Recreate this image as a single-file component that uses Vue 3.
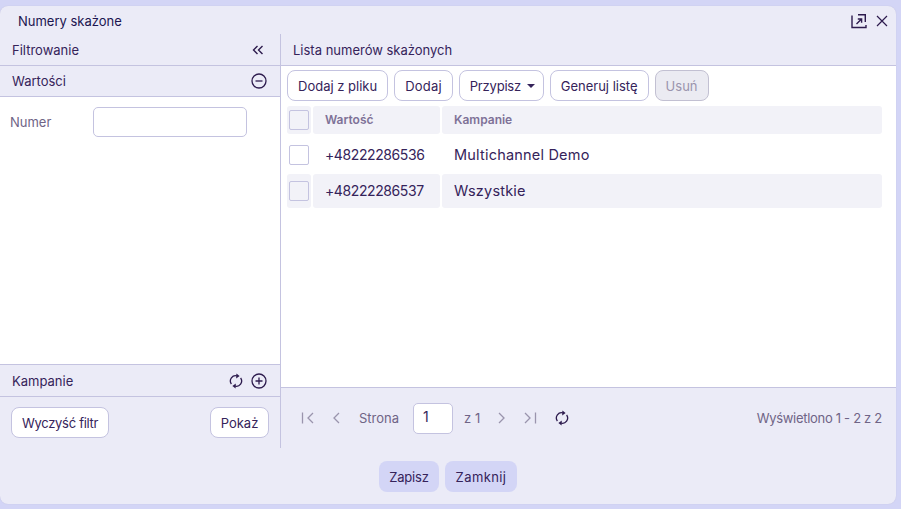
<template>
  <div class="page">
    <div class="dialog">
      <div class="title-bar">
        <span class="title">Numery skażone</span>
        <div class="title-icons">
          <svg width="16" height="16" viewBox="0 0 16 16" fill="none" stroke="#2d1b4e" stroke-width="1.4">
            <path d="M1 2.5V14.5H15V12" />
            <path d="M7 1.7h7.3V9" />
            <path d="M5.5 11L10 6.5M6.8 6h3.8v3.8" />
          </svg>
          <svg width="12" height="12" viewBox="0 0 12 12" fill="none" stroke="#2d1b4e" stroke-width="1.2">
            <path d="M1 1l10 10M11 1L1 11" />
          </svg>
        </div>
      </div>

      <div class="columns">
        <aside class="filters">
          <div class="panel-head first">
            <span>Filtrowanie</span>
            <svg class="collapse" width="12" height="10" viewBox="0 0 12 10" fill="none" stroke="#2d1b4e" stroke-width="1.4">
              <path d="M5.5 1L1.5 5l4 4M10.5 1l-4 4 4 4" />
            </svg>
          </div>
          <div class="panel-head">
            <span>Wartości</span>
            <svg width="16" height="16" viewBox="0 0 16 16" fill="none" stroke="#2d1b4e" stroke-width="1.3">
              <circle cx="8" cy="8" r="7" />
              <path d="M4.5 8h7" />
            </svg>
          </div>
          <div class="filter-body">
            <label class="field-label">Numer</label>
            <input class="field-input" type="text" />
          </div>
          <div class="panel-head bottom">
            <span>Kampanie</span>
            <div class="head-icons">
              <svg width="14" height="16" viewBox="0 0 14 16" fill="none" stroke="#2d1b4e" stroke-width="1.3">
                <path d="M2.4 11A5.2 5.2 0 0 1 8.2 3" />
                <path d="M11.6 5A5.2 5.2 0 0 1 5.8 13" />
                <path d="M7.4 .4l3.2 2.7-3.4 2.3z" fill="#2d1b4e" stroke="none" />
                <path d="M6.6 15.6l-3.2-2.7 3.4-2.3z" fill="#2d1b4e" stroke="none" />
              </svg>
              <svg width="16" height="16" viewBox="0 0 16 16" fill="none" stroke="#2d1b4e" stroke-width="1.3">
                <circle cx="8" cy="8" r="7" />
                <path d="M4.5 8h7M8 4.5v7" />
              </svg>
            </div>
          </div>
          <div class="filter-actions">
            <button class="btn clear">Wyczyść filtr</button>
            <button class="btn show">Pokaż</button>
          </div>
        </aside>

        <section class="list">
          <div class="list-head">Lista numerów skażonych</div>
          <div class="list-body">
            <div class="toolbar">
              <button class="btn">Dodaj z pliku</button>
              <button class="btn add">Dodaj</button>
              <button class="btn assign">Przypisz <i class="caret"></i></button>
              <button class="btn">Generuj listę</button>
              <button class="btn disabled">Usuń</button>
            </div>
            <div class="table">
              <div class="row head">
                <div class="cell check"><span class="box"></span></div>
                <div class="cell">Wartość</div>
                <div class="cell">Kampanie</div>
              </div>
              <div v-for="(row, i) in rows" :key="row.value" class="row" :class="{ odd: i % 2 === 1 }">
                <div class="cell check"><span class="box"></span></div>
                <div class="cell number">{{ row.value }}</div>
                <div class="cell campaign">{{ row.campaign }}</div>
              </div>
            </div>
          </div>
          <div class="pager">
            <svg width="14" height="12" viewBox="0 0 14 12" fill="none" stroke="#9a94ad" stroke-width="1.3">
              <path d="M1.5 .5v11M12 1L7 6l5 5" />
            </svg>
            <svg class="prev" width="8" height="12" viewBox="0 0 8 12" fill="none" stroke="#9a94ad" stroke-width="1.3">
              <path d="M7 1L2 6l5 5" />
            </svg>
            <span class="page-label">Strona</span>
            <input class="page-input" type="text" value="1" />
            <span class="page-total">z 1</span>
            <svg class="next" width="8" height="12" viewBox="0 0 8 12" fill="none" stroke="#9a94ad" stroke-width="1.3">
              <path d="M1 1l5 5-5 5" />
            </svg>
            <svg class="last" width="14" height="12" viewBox="0 0 14 12" fill="none" stroke="#9a94ad" stroke-width="1.3">
              <path d="M12.5 .5v11M2 1l5 5-5 5" />
            </svg>
            <svg class="reload" width="14" height="16" viewBox="0 0 14 16" fill="none" stroke="#2d1b4e" stroke-width="1.3">
              <path d="M2.4 11A5.2 5.2 0 0 1 8.2 3" />
              <path d="M11.6 5A5.2 5.2 0 0 1 5.8 13" />
              <path d="M7.4 .4l3.2 2.7-3.4 2.3z" fill="#2d1b4e" stroke="none" />
              <path d="M6.6 15.6l-3.2-2.7 3.4-2.3z" fill="#2d1b4e" stroke="none" />
            </svg>
            <span class="summary">Wyświetlono 1 - 2 z 2</span>
          </div>
        </section>
      </div>

      <div class="footer">
        <button class="btn primary save">Zapisz</button>
        <button class="btn primary close">Zamknij</button>
      </div>
    </div>
  </div>
</template>

<script setup>
const rows = [
  { value: '+48222286536', campaign: 'Multichannel Demo' },
  { value: '+48222286537', campaign: 'Wszystkie' }
]
</script>

<style scoped>
.page {
  height: 509px;
  width: 901px;
  box-sizing: border-box;
  padding: 6px 5px 5px 0;
  background: #d3d5f6;
  overflow: hidden;
  font-family: Inter, "Noto Sans", sans-serif;
  color: #35235a;
}

.dialog {
  height: 100%;
  display: flex;
  flex-direction: column;
  background: #ebebf7;
  border-radius: 8px;
  box-shadow: 0 0 1px #b9b8d8;
}

.title-bar {
  height: 28px;
  flex: none;
  display: flex;
  align-items: center;
  justify-content: space-between;
  padding: 1px 8px 0 18px;
  box-sizing: border-box;
}

.title {
  font-size: 13px;
  color: #1c1550;
}

.title-icons {
  display: flex;
  align-items: center;
  gap: 9px;
}

.columns {
  height: 414px;
  flex: none;
  display: flex;
}

.filters {
  width: 280px;
  flex: none;
  display: flex;
  flex-direction: column;
}

.panel-head {
  height: 31px;
  flex: none;
  box-sizing: border-box;
  display: flex;
  align-items: center;
  justify-content: space-between;
  padding: 0 13px 0 12px;
  font-size: 13px;
  border-bottom: 1px solid #c4c3e0;
}

.panel-head.first {
  height: 32px;
}

.panel-head.bottom {
  border-top: 1px solid #c4c3e0;
  height: 33px;
}

.collapse {
  margin-right: 3px;
}

.head-icons {
  display: flex;
  align-items: center;
  gap: 8px;
}

.filter-body {
  flex: 1;
  background: #fff;
  display: flex;
  align-items: flex-start;
  padding: 10px 0 0 10px;
}

.field-label {
  width: 83px;
  font-size: 13px;
  line-height: 30px;
  color: #6f6486;
}

.field-input {
  width: 154px;
  height: 30px;
  box-sizing: border-box;
  border: 1px solid #c4c3e0;
  border-radius: 5px;
  background: #fff;
  outline: none;
}

.filter-actions {
  height: 51px;
  flex: none;
  box-sizing: border-box;
  display: flex;
  justify-content: space-between;
  align-items: flex-start;
  padding: 10px 11px 0;
}

.list {
  flex: 1;
  display: flex;
  flex-direction: column;
  border-left: 1px solid #c4c3e0;
}

.list-head {
  height: 32px;
  flex: none;
  box-sizing: border-box;
  display: flex;
  align-items: center;
  padding-left: 12px;
  font-size: 13px;
  border-bottom: 1px solid #c4c3e0;
}

.list-body {
  flex: 1;
  background: #fff;
  padding: 4px 14px 0 6px;
  border-bottom: 1px solid #c4c3e0;
}

.toolbar {
  display: flex;
  gap: 6px;
}

.btn {
  height: 31px;
  box-sizing: border-box;
  padding: 0 10px;
  border: 1px solid #c4c3e0;
  border-radius: 8px;
  background: #fff;
  color: #35235a;
  font-family: inherit;
  font-size: 13px;
  display: inline-flex;
  align-items: center;
  white-space: nowrap;
}

.btn.clear {
  letter-spacing: -0.3px;
}

.btn.show {
  width: 59px;
  justify-content: center;
}

.btn.add {
  letter-spacing: 0.2px;
}

.btn.assign {
  letter-spacing: -0.2px;
  width: 85px;
}

.btn.disabled {
  width: 54px;
  justify-content: center;
  background: #ebebf2;
  border-color: #c2c0d2;
  color: #9a94ad;
}

.btn.primary {
  background: #d3d5f6;
  border: none;
  justify-content: center;
}

.btn.save {
  width: 60px;
  letter-spacing: -0.2px;
}

.btn.close {
  width: 72px;
  letter-spacing: 0.4px;
}

.caret {
  display: inline-block;
  margin-left: 6px;
  border-left: 4px solid transparent;
  border-right: 4px solid transparent;
  border-top: 4px solid #35235a;
}

.table {
  margin-top: 5px;
  display: flex;
  flex-direction: column;
  gap: 2px;
}

.row {
  display: grid;
  grid-template-columns: 24px 127px 1fr;
  column-gap: 2px;
  height: 34px;
  font-size: 14px;
}

.row.head {
  height: 28px;
  font-size: 12px;
  font-weight: 600;
  color: #7e7197;
  margin-bottom: 2px;
}

.cell {
  display: flex;
  align-items: center;
  padding: 0 0 2px 12px;
  border-radius: 3px;
}

.cell.check {
  padding: 0 0 0 2px;
}

.cell.number {
  letter-spacing: -0.4px;
}

.cell.campaign {
  font-size: 14.5px;
  letter-spacing: 0.2px;
}

.row.head .cell,
.row.odd .cell {
  background: #f2f2f8;
}

.box {
  width: 20px;
  height: 20px;
  box-sizing: border-box;
  border: 1px solid #c4c3e0;
  border-radius: 2px;
  background: #fff;
}

.row.head .box,
.row.odd .box {
  background: #f2f2f8;
}

.pager {
  height: 60px;
  flex: none;
  display: flex;
  align-items: center;
  padding: 0 14px 0 20px;
  font-size: 13px;
  color: #6f6486;
}

.prev {
  margin-left: 17px;
}

.page-label {
  margin-left: 19px;
}

.page-input {
  width: 40px;
  height: 31px;
  box-sizing: border-box;
  margin-left: 14px;
  padding: 0 0 4px 9px;
  border: 1px solid #c4c3e0;
  border-radius: 5px;
  background: #fff;
  color: #35235a;
  font-family: inherit;
  font-size: 14px;
  outline: none;
}

.page-total {
  margin-left: 11px;
}

.next {
  margin-left: 18px;
}

.last {
  margin-left: 17px;
}

.reload {
  margin-left: 18px;
}

.summary {
  margin-left: auto;
  letter-spacing: -0.3px;
}

.footer {
  flex: 1;
  display: flex;
  justify-content: center;
  align-items: flex-start;
  gap: 6px;
  padding-top: 13px;
}
</style>
